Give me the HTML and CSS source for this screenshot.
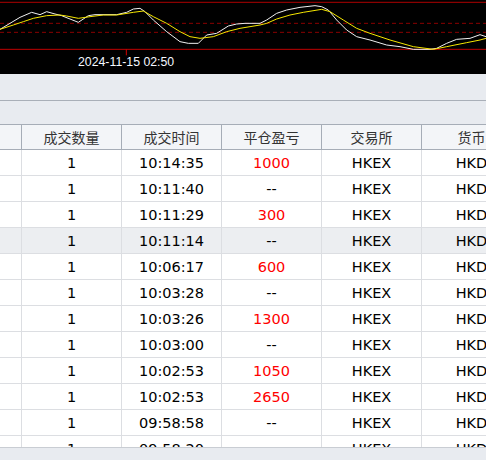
FILE: index.html
```html
<!DOCTYPE html>
<html>
<head>
<meta charset="utf-8">
<link rel="stylesheet" href="styles.css">
</head>
<body>
<div class="page">
  <div class="chart">
    <svg class="chart-svg" viewBox="0 0 1458 222" preserveAspectRatio="none" width="486" height="74">
      <line x1="0" y1="7" x2="1458" y2="7" stroke="#8a0000" stroke-width="4"/>
      <line x1="0" y1="70" x2="1458" y2="70" stroke="#8a0000" stroke-width="3" stroke-dasharray="12 9"/>
      <line x1="0" y1="97" x2="1458" y2="97" stroke="#8a0000" stroke-width="3" stroke-dasharray="12 9"/>
      <line x1="0" y1="148" x2="1458" y2="148" stroke="#c00000" stroke-width="3"/>
      <line x1="379" y1="148" x2="379" y2="166" stroke="#d00000" stroke-width="3"/>
      <polyline fill="none" stroke="#f0f0f0" stroke-width="3" points="0,88 30,70 60,52 95,37 120,44 140,35 165,42 185,47 210,57 235,67 265,47 285,44 350,44 380,37 400,27 420,25 435,35 460,60 500,95 540,125 565,130 595,130 620,105 650,100 685,78 710,72 735,70 780,70 800,60 830,40 860,30 900,22 945,17 965,20 985,30 1010,60 1040,90 1070,110 1110,120 1160,135 1200,140 1240,148 1290,148 1310,145 1340,130 1370,118 1410,115 1440,104 1458,110"/>
      <polyline fill="none" stroke="#f5e600" stroke-width="3" points="0,88 40,75 70,65 100,55 140,47 180,45 200,48 235,55 270,50 310,45 350,45 400,37 430,33 460,50 500,70 540,95 570,110 600,115 640,110 680,95 720,85 780,75 800,70 830,57 870,45 910,37 965,28 990,35 1030,60 1070,85 1110,100 1170,120 1240,140 1300,148 1340,140 1400,128 1440,120 1458,115"/>
    </svg>
    <div class="chart-date">2024-11-15 02:50</div>
  </div>
  <div class="toolbar"></div>
  <div class="band"></div>
  <div class="grid">
    <div class="row head">
      <div class="cell"></div>
      <div class="cell">成交数量</div>
      <div class="cell">成交时间</div>
      <div class="cell">平仓盈亏</div>
      <div class="cell">交易所</div>
      <div class="cell">货币</div>
    </div>
    <div class="row"><div class="cell"></div><div class="cell">1</div><div class="cell">10:14:35</div><div class="cell red">1000</div><div class="cell">HKEX</div><div class="cell">HKD</div></div>
    <div class="row"><div class="cell"></div><div class="cell">1</div><div class="cell">10:11:40</div><div class="cell">--</div><div class="cell">HKEX</div><div class="cell">HKD</div></div>
    <div class="row"><div class="cell"></div><div class="cell">1</div><div class="cell">10:11:29</div><div class="cell red">300</div><div class="cell">HKEX</div><div class="cell">HKD</div></div>
    <div class="row selected"><div class="cell"></div><div class="cell">1</div><div class="cell">10:11:14</div><div class="cell">--</div><div class="cell">HKEX</div><div class="cell">HKD</div></div>
    <div class="row"><div class="cell"></div><div class="cell">1</div><div class="cell">10:06:17</div><div class="cell red">600</div><div class="cell">HKEX</div><div class="cell">HKD</div></div>
    <div class="row"><div class="cell"></div><div class="cell">1</div><div class="cell">10:03:28</div><div class="cell">--</div><div class="cell">HKEX</div><div class="cell">HKD</div></div>
    <div class="row"><div class="cell"></div><div class="cell">1</div><div class="cell">10:03:26</div><div class="cell red">1300</div><div class="cell">HKEX</div><div class="cell">HKD</div></div>
    <div class="row"><div class="cell"></div><div class="cell">1</div><div class="cell">10:03:00</div><div class="cell">--</div><div class="cell">HKEX</div><div class="cell">HKD</div></div>
    <div class="row"><div class="cell"></div><div class="cell">1</div><div class="cell">10:02:53</div><div class="cell red">1050</div><div class="cell">HKEX</div><div class="cell">HKD</div></div>
    <div class="row"><div class="cell"></div><div class="cell">1</div><div class="cell">10:02:53</div><div class="cell red">2650</div><div class="cell">HKEX</div><div class="cell">HKD</div></div>
    <div class="row"><div class="cell"></div><div class="cell">1</div><div class="cell">09:58:58</div><div class="cell">--</div><div class="cell">HKEX</div><div class="cell">HKD</div></div>
    <div class="row"><div class="cell"></div><div class="cell">1</div><div class="cell">09:58:20</div><div class="cell">--</div><div class="cell">HKEX</div><div class="cell">HKD</div></div>
  </div>
  <div class="footer"></div>
</div>
</body>
</html>
```
FILE: styles.css
```css
html, body {
  margin: 0;
  padding: 0;
  background: #e8ebf0;
}
.page {
  width: 486px;
  height: 460px;
  overflow: hidden;
  display: flex;
  flex-direction: column;
  background: #e8ebf0;
}
.chart {
  height: 74px;
  flex: none;
  background: #000;
  position: relative;
}
.chart-svg {
  display: block;
}
.chart-date {
  position: absolute;
  left: 78px;
  top: 55px;
  color: #f4f8ff;
  font-family: "Liberation Sans", Arial, sans-serif;
  font-size: 12.3px;
  line-height: 15px;
  white-space: nowrap;
}
.toolbar {
  height: 26px;
  flex: none;
  background: #e8ebf0;
  border-bottom: 1px solid #a9afb8;
}
.band {
  height: 23px;
  flex: none;
  background: #e8ebf0;
}
.grid {
  flex: none;
  height: 323px;
  overflow: hidden;
  background: #fff;
}
.row {
  display: grid;
  grid-template-columns: 21px 100px 100px 100px 100px 100px;
  height: 25px;
  border-bottom: 1px solid #dcdee2;
  background: #fff;
}
.row.selected {
  background: #eceef1;
}
.cell {
  display: flex;
  align-items: center;
  justify-content: center;
  border-left: 1px solid #dcdee2;
  font-family: "DejaVu Sans", Verdana, sans-serif;
  font-size: 14.5px;
  color: #000;
  white-space: nowrap;
  overflow: hidden;
}
.cell:first-child {
  border-left: none;
}
.cell.red {
  color: #ff0000;
}
.row.head {
  height: 24px;
  background: #f3f5f8;
  border-top: 1px solid #a6adb7;
  border-bottom: 1px solid #a6adb7;
}
.row.head .cell {
  border-left-color: #a6adb7;
  font-family: "Noto Sans CJK SC", sans-serif;
  font-size: 14px;
  color: #333;
}
.footer {
  flex: 1;
  background: #e8ebf0;
  border-top: 1px solid #c9cdd3;
}
```
